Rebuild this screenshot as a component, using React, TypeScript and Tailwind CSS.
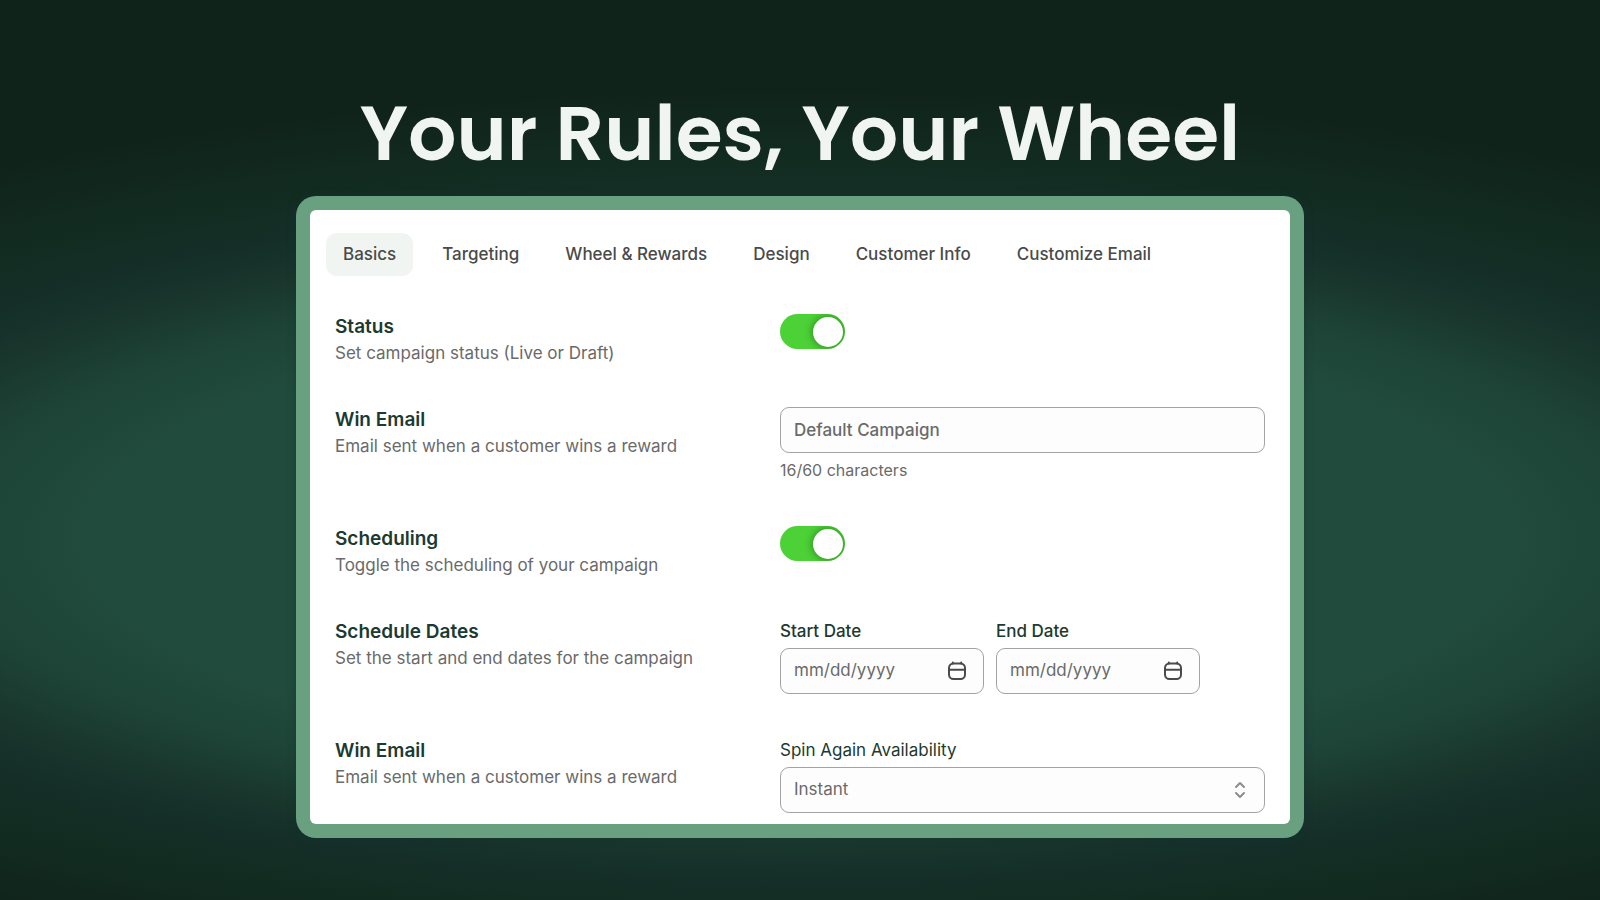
import { useState, type ReactNode } from "react";

const tabs = ["Basics", "Targeting", "Wheel & Rewards", "Design", "Customer Info", "Customize Email"];

const fieldClass =
  "h-[46px] w-full rounded-[9px] border border-[#a3a3a3] bg-[#fdfdfd] px-[13px] text-[17px] text-[#6a6a6a] outline-none placeholder:text-[#6a6a6a]";

function Switch({ label }: { label: string }) {
  const [on, setOn] = useState(true);
  return (
    <label className="flex h-[35px] w-[65px] cursor-pointer items-center overflow-hidden rounded-full bg-[#cfcfcf] p-[2px] has-checked:justify-end has-checked:bg-[#4cd137]">
      <input type="checkbox" role="switch" aria-label={label} checked={on} onChange={() => setOn(!on)} className="sr-only" />
      <span className="size-[30px] rounded-full bg-white shadow-[0_0_6px_2px_rgba(20,80,10,0.4)]" />
    </label>
  );
}

function CalendarIcon() {
  return (
    <svg viewBox="0 0 20 20" className="size-5 shrink-0 text-[#4a4a4a]" fill="none" stroke="currentColor" strokeWidth="2" strokeLinecap="round">
      <rect x="2" y="2.5" width="16" height="15.5" rx="4.5" />
      <path d="M2 8.7H18M5.8 1.5V2.5M14.2 1.5V2.5" />
    </svg>
  );
}

function DateField({ id, label }: { id: string; label: string }) {
  return (
    <div className="w-[204px]">
      <label htmlFor={id} className="block text-[17px] leading-6 font-medium text-[#1c3a30]">{label}</label>
      <div className="mt-[5px] flex h-[46px] items-center rounded-[9px] border border-[#a3a3a3] bg-[#fdfdfd] pr-4 pl-[13px]">
        <input id={id} type="text" placeholder="mm/dd/yyyy" className="min-w-0 flex-1 bg-transparent text-[17px] text-[#6a6a6a] outline-none placeholder:text-[#6a6a6a]" />
        <CalendarIcon />
      </div>
    </div>
  );
}

function Row({ title, text, children }: { title: string; text: string; children: ReactNode }) {
  return (
    <section className="grid grid-cols-[445px_1fr]">
      <div>
        <h2 className="text-[19px] leading-[26px] font-semibold text-[#1c3a30]">{title}</h2>
        <p className="text-[17px] leading-[26px] text-[#6a6a6a]">{text}</p>
      </div>
      <div className="pb-[3px]">{children}</div>
    </section>
  );
}

export default function App() {
  const [active, setActive] = useState("Basics");
  return (
    <main className="flex min-h-screen flex-col items-center bg-[#10231a] bg-[radial-gradient(90%_50%_at_50%_60%,#214c3d_0%,#214c3d_48%,#1d4336_60%,#1a382d_67%,#16302a_73%,#142e26_79%,#122b20_86%,#10231a_100%)] pt-[88px] pb-[62px] font-[Inter,sans-serif]">
      <h1 className="font-[Poppins,Inter,sans-serif] text-[76px] leading-[92px] font-semibold whitespace-nowrap text-[#f1f5f1]">Your Rules, Your Wheel</h1>
      <div className="mt-4 w-full max-w-[1008px] rounded-[20px] bg-[#69a07f] p-3.5 shadow-[0_0_8px_rgba(20,50,45,0.6)]">
        <div className="rounded-[6px] bg-white px-4 pt-[23px] pb-2">
          <nav className="flex gap-3">
            {tabs.map((tab) => (
              <button
                key={tab}
                type="button"
                aria-current={tab === active}
                onClick={() => setActive(tab)}
                className="h-[43px] rounded-[11px] px-[17px] pt-px text-[17px] font-medium whitespace-nowrap text-[#4a4a4a] aria-current:bg-[#f1f5f2]"
              >
                {tab}
              </button>
            ))}
          </nav>
          <div className="mt-[38px] flex flex-col gap-[41px] px-[9px]">
            <Row title="Status" text="Set campaign status (Live or Draft)">
              <Switch label="Status" />
            </Row>
            <Row title="Win Email" text="Email sent when a customer wins a reward">
              <input aria-label="Win Email" defaultValue="Default Campaign" className={fieldClass + " font-medium"} />
              <p className="mt-[5px] text-[16px] leading-6 text-[#6a6a6a]">16/60 characters</p>
            </Row>
            <Row title="Scheduling" text="Toggle the scheduling of your campaign">
              <Switch label="Scheduling" />
            </Row>
            <Row title="Schedule Dates" text="Set the start and end dates for the campaign">
              <div className="flex gap-3">
                <DateField id="start" label="Start Date" />
                <DateField id="end" label="End Date" />
              </div>
            </Row>
            <Row title="Win Email" text="Email sent when a customer wins a reward">
              <label htmlFor="spin" className="block text-[17px] leading-6 text-[#1c3a30]">Spin Again Availability</label>
              <div className="relative mt-[5px]">
                <select id="spin" className={fieldClass + " appearance-none"}>
                  <option>Instant</option>
                </select>
                <svg viewBox="0 0 12 18" className="pointer-events-none absolute top-[14px] right-[19px] h-[18px] w-3 text-[#8c8c8c]" fill="none" stroke="currentColor" strokeWidth="2" strokeLinecap="round" strokeLinejoin="round">
                  <path d="M2 6 6 2 10 6M2 12 6 16 10 12" />
                </svg>
              </div>
            </Row>
          </div>
        </div>
      </div>
    </main>
  );
}
